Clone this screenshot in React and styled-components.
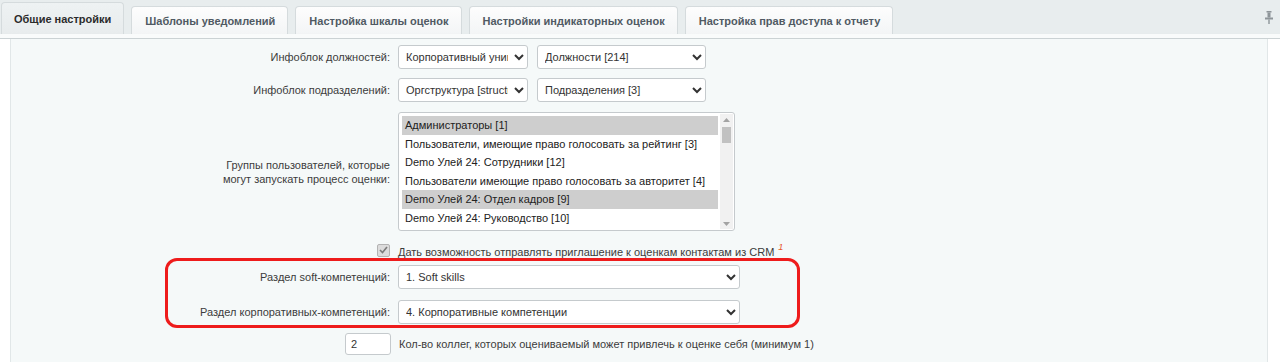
import React from "react";
import styled, { createGlobalStyle } from "styled-components";

const GlobalStyle = createGlobalStyle`
  html, body {
    margin: 0;
    padding: 0;
    background: #ffffff;
  }

  body {
    font-family: "Liberation Sans", Arial, Helvetica, sans-serif;
    font-size: 11px;
    color: #333333;
  }
`;

const Page = styled.div`
  width: 1280px;
  height: 362px;
  overflow: hidden;
  display: flex;
  flex-direction: column;
`;

const TabBar = styled.div`
  display: flex;
  align-items: flex-end;
  gap: 7px;
  height: 34px;
  padding-left: 1px;
  padding-right: 7px;
  background: #e8edee;
`;

const Tab = styled.div`
  display: flex;
  align-items: center;
  height: ${(p) => (p.$active ? "32px" : "28px")};
  padding: 0 ${(p) => (p.$active ? "12px" : "12px")} 0 ${(p) => (p.$active ? "12px" : "13px")};
  box-sizing: border-box;
  border: 1px solid #d5dbdd;
  border-bottom: none;
  border-radius: 4px 4px 0 0;
  background: ${(p) =>
    p.$active
      ? "linear-gradient(#eef2f3, #e8eced)"
      : "linear-gradient(#fdfdfd, #f3f5f6)"};
  font-size: 11px;
  font-weight: bold;
  color: ${(p) => (p.$active ? "#2b2b2b" : "#505a63")};
  white-space: nowrap;
`;

const Pin = styled.div`
  margin-left: auto;
  align-self: center;
  display: flex;
`;

const TabStrip = styled.div`
  height: 4px;
  background: #f9fbfb;
  border-bottom: 1px solid #cbd2d4;
  box-shadow: 0 1px 2px rgba(0, 0, 0, 0.12);
`;

const ContentWrap = styled.div`
  flex: 1;
  display: flex;
  padding: 0 12px 0 10px;
  background: #ffffff;
`;

const Panel = styled.div`
  flex: 1;
  background: #f5f9f9;
  border-left: 1px solid #e1e7e8;
  border-right: 1px solid #e1e7e8;
  padding-top: 6px;
  display: flex;
  flex-direction: column;
`;

const Row = styled.div`
  display: flex;
  align-items: ${(p) => p.$align || "center"};
  gap: 8px;
  margin-top: ${(p) => p.$top || 0}px;
`;

const Label = styled.div`
  width: ${(p) => p.$width || 379}px;
  flex-shrink: 0;
  text-align: right;
  color: #3c3c3c;
  line-height: 14px;
`;

const Controls = styled.div`
  display: flex;
  gap: 9px;
`;

const Select = styled.select`
  width: ${(p) => p.$width}px;
  height: 24px;
  box-sizing: border-box;
  border: 1px solid #c5cacd;
  border-radius: 3px;
  background: #ffffff;
  font-family: inherit;
  font-size: 11px;
  color: #333333;
  padding: 0 3px;
`;

const ListBox = styled.div`
  width: 337px;
  height: 119px;
  box-sizing: border-box;
  border: 1px solid #c5cacd;
  border-radius: 3px;
  background: #ffffff;
  display: flex;
  padding: 3px 1px 3px 3px;
`;

const ListItems = styled.div`
  flex: 1;
  display: flex;
  flex-direction: column;
`;

const ListItem = styled.div`
  height: 18.5px;
  line-height: 18.5px;
  padding-left: 3px;
  white-space: nowrap;
  background: ${(p) => (p.$selected ? "#cecece" : "transparent")};
  color: #222222;
`;

const ScrollBar = styled.div`
  width: 13px;
  margin-left: 2px;
  margin-top: -2px;
  margin-bottom: -2px;
  display: flex;
  flex-direction: column;
  align-items: center;
  background: #f1f1f1;
`;

const ScrollArrow = styled.div`
  height: 11px;
  display: flex;
  align-items: center;
  justify-content: center;
`;

const ScrollThumb = styled.div`
  width: 9px;
  height: 16px;
  background: #c1c1c1;
  margin-top: 2px;
`;

const ScrollSpacer = styled.div`
  flex: 1;
`;

const CheckRow = styled.div`
  display: flex;
  align-items: center;
  gap: 8px;
  margin-top: 11px;
  padding-left: 366px;
  height: 16px;
`;

const CheckBox = styled.span`
  width: 11px;
  height: 11px;
  border: 1px solid #b3b3b3;
  border-radius: 2px;
  background: #dcdcdc;
  display: flex;
  align-items: center;
  justify-content: center;
`;

const CheckText = styled.span`
  color: #3c3c3c;
`;

const Sup = styled.sup`
  color: #e5572b;
  font-size: 9px;
  font-style: italic;
  margin-left: 4px;
  vertical-align: 6px;
`;

const Highlight = styled.div`
  margin-left: 154px;
  width: 635px;
  box-sizing: border-box;
  border: 3px solid #ee1c1c;
  border-radius: 12px;
  padding: 4px 0 1px;
  display: flex;
  flex-direction: column;
`;

const NumberInput = styled.input`
  width: 46px;
  height: 22px;
  box-sizing: border-box;
  border: 1px solid #c5cacd;
  border-radius: 3px;
  background: #ffffff;
  font-family: inherit;
  font-size: 11px;
  color: #333333;
  padding: 0 5px;
`;

const groups = [
  { name: "Администраторы [1]", selected: true },
  { name: "Пользователи, имеющие право голосовать за рейтинг [3]" },
  { name: "Demo Улей 24: Сотрудники [12]" },
  { name: "Пользователи имеющие право голосовать за авторитет [4]" },
  { name: "Demo Улей 24: Отдел кадров [9]", selected: true },
  { name: "Demo Улей 24: Руководство [10]" },
];

const tabs = [
  "Общие настройки",
  "Шаблоны уведомлений",
  "Настройка шкалы оценок",
  "Настройки индикаторных оценок",
  "Настройка прав доступа к отчету",
];

function PinIcon() {
  return (
    <svg width="8" height="13" viewBox="0 0 8 13">
      <rect x="1.5" y="0" width="5" height="1.5" fill="#8e9599" />
      <rect x="2.5" y="1.5" width="3" height="5" fill="#8e9599" />
      <rect x="0" y="6.5" width="8" height="2" fill="#8e9599" />
      <rect x="3.3" y="8.5" width="1.4" height="4.5" fill="#8e9599" />
    </svg>
  );
}

function Arrow({ up }) {
  return (
    <svg width="7" height="4" viewBox="0 0 7 4">
      <path d={up ? "M0 4 L3.5 0 L7 4 Z" : "M0 0 L3.5 4 L7 0 Z"} fill="#a3a3a3" />
    </svg>
  );
}

export default function App() {
  return (
    <Page>
      <GlobalStyle />
      <TabBar>
        {tabs.map((title, index) => (
          <Tab key={title} $active={index === 0}>
            {title}
          </Tab>
        ))}
        <Pin>
          <PinIcon />
        </Pin>
      </TabBar>
      <TabStrip />
      <ContentWrap>
        <Panel>
          <Row>
            <Label>Инфоблок должностей:</Label>
            <Controls>
              <Select $width={130} defaultValue="a">
                <option value="a">Корпоративный университет</option>
              </Select>
              <Select $width={169} defaultValue="b">
                <option value="b">Должности [214]</option>
              </Select>
            </Controls>
          </Row>
          <Row $top={9}>
            <Label>Инфоблок подразделений:</Label>
            <Controls>
              <Select $width={130} defaultValue="a">
                <option value="a">Оргструктура [structure]</option>
              </Select>
              <Select $width={169} defaultValue="b">
                <option value="b">Подразделения [3]</option>
              </Select>
            </Controls>
          </Row>
          <Row $top={10}>
            <Label>
              Группы пользователей, которые
              <br />
              могут запускать процесс оценки:
            </Label>
            <ListBox>
              <ListItems>
                {groups.map((group) => (
                  <ListItem key={group.name} $selected={group.selected}>
                    {group.name}
                  </ListItem>
                ))}
              </ListItems>
              <ScrollBar>
                <ScrollArrow>
                  <Arrow up />
                </ScrollArrow>
                <ScrollThumb />
                <ScrollSpacer />
                <ScrollArrow>
                  <Arrow />
                </ScrollArrow>
              </ScrollBar>
            </ListBox>
          </Row>
          <CheckRow>
            <CheckBox>
              <svg width="9" height="8" viewBox="0 0 9 8">
                <path d="M1 4 L3.5 6.5 L8 1" fill="none" stroke="#7a7a7a" strokeWidth="1.6" />
              </svg>
            </CheckBox>
            <CheckText>
              Дать возможность отправлять приглашение к оценкам контактам из CRM
              <Sup>1</Sup>
            </CheckText>
          </CheckRow>
          <Highlight>
            <Row>
              <Label $width={222}>Раздел soft-компетенций:</Label>
              <Select $width={342} defaultValue="1">
                <option value="1">1. Soft skills</option>
              </Select>
            </Row>
            <Row $top={11}>
              <Label $width={222}>Раздел корпоративных-компетенций:</Label>
              <Select $width={342} defaultValue="4">
                <option value="4">4. Корпоративные компетенции</option>
              </Select>
            </Row>
          </Highlight>
          <Row $top={5}>
            <Label $width={326} />
            <NumberInput defaultValue="2" />
            <CheckText>Кол-во коллег, которых оцениваемый может привлечь к оценке себя (минимум 1)</CheckText>
          </Row>
        </Panel>
      </ContentWrap>
    </Page>
  );
}
